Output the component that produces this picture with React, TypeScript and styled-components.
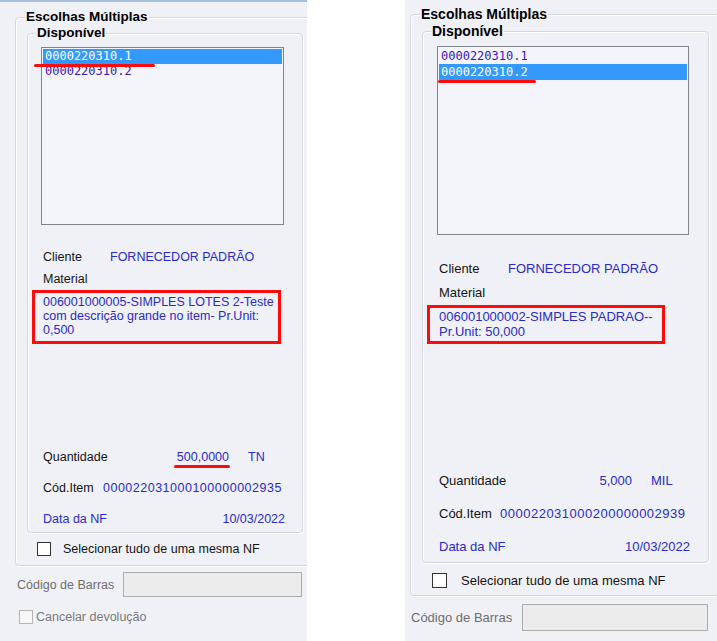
import React from "react";
import styled, { createGlobalStyle } from "styled-components";

type M = {
  panelW: number; offset: number; topBar: boolean; padTop: number; padLeft: number;
  font: number; bold: number; lh: number;
  outerW: number; outerPadL: number; outerPadB: number; outerLegendML: number; innerLegendML: number;
  innerW: number; innerPadL: number; innerPadB: number;
  listMT: number; listW: number; listH: number; itemH: number;
  clienteMT: number; rowGap: number; matMT: number; matLH: number;
  qtyMT: number; infoGap: number; infoW: number;
  labelW: number; qtyLabelW: number; qtyValW: number; unitML: number; codeLabelW: number;
  checkMT: number; checkSize: number; checkGap: number; checkML: number;
  barMT: number; barLabelPL: number; barLabelW: number; inputW: number; inputH: number;
};

const LEFT: M = {
  panelW: 307, offset: 0, topBar: true, padTop: 7, padLeft: 15,
  font: 12.5, bold: 13.5, lh: 16,
  outerW: 312, outerPadL: 11, outerPadB: 8, outerLegendML: -2, innerLegendML: -5,
  innerW: 276, innerPadL: 13, innerPadB: 5,
  listMT: 6, listW: 243, listH: 178, itemH: 15,
  clienteMT: 24, rowGap: 6, matMT: 8, matLH: 14,
  qtyMT: 112, infoGap: 15, infoW: 242,
  labelW: 67, qtyLabelW: 130, qtyValW: 56, unitML: 19, codeLabelW: 60,
  checkMT: 8, checkSize: 14, checkGap: 12, checkML: 10,
  barMT: 6, barLabelPL: 2, barLabelW: 106, inputW: 179, inputH: 25,
};

const RIGHT: M = {
  panelW: 312, offset: 98, topBar: false, padTop: 6, padLeft: 5,
  font: 13, bold: 14, lh: 17,
  outerW: 320, outerPadL: 11, outerPadB: 6, outerLegendML: -2, innerLegendML: -6,
  innerW: 287, innerPadL: 14, innerPadB: 7,
  listMT: 6, listW: 252, listH: 189, itemH: 16,
  clienteMT: 25, rowGap: 7, matMT: 8, matLH: 15,
  qtyMT: 133, infoGap: 16, infoW: 251,
  labelW: 69, qtyLabelW: 136, qtyValW: 57, unitML: 19, codeLabelW: 61,
  checkMT: 9, checkSize: 15, checkGap: 14, checkML: 10,
  barMT: 8, barLabelPL: 1, barLabelW: 111, inputW: 186, inputH: 27,
};

const BG = "#f0f1f7";
const BLUE = "#2a2ac6";
const RED = "#ff0a0a";

const GlobalStyle = createGlobalStyle`
  html, body { margin: 0; padding: 0; background: #ffffff; }
  body { font-family: "Liberation Sans", Arial, sans-serif; color: #111; }
  #root { width: 717px; height: 641px; }
`;

const Page = styled.div`
  display: flex;
  width: 717px;
  height: 641px;
  overflow: hidden;
  background: #ffffff;
`;

const Panel = styled.div<{ $m: M }>`
  flex: none;
  box-sizing: border-box;
  width: ${(p) => p.$m.panelW}px;
  height: 641px;
  margin-left: ${(p) => p.$m.offset}px;
  padding: ${(p) => p.$m.padTop}px 0 0 ${(p) => p.$m.padLeft}px;
  background: ${BG};
  border-top: ${(p) => (p.$m.topBar ? "2px solid #a6bedf" : "none")};
  overflow: hidden;
  font-size: ${(p) => p.$m.font}px;
  line-height: ${(p) => p.$m.lh}px;
`;

const Group = styled.fieldset<{ $w: number; $pl: number; $pb: number }>`
  box-sizing: border-box;
  width: ${(p) => p.$w}px;
  margin: 0;
  padding: 0 0 ${(p) => p.$pb}px ${(p) => p.$pl}px;
  border: 1px solid #d3d6df;
  border-radius: 4px;
  box-shadow: inset 1px 1px 0 #ffffff, 1px 1px 0 #ffffff;
  display: flex;
  flex-direction: column;
  min-width: 0;
`;

const Legend = styled.legend<{ $m: M; $ml: number }>`
  margin-left: ${(p) => p.$ml}px;
  padding: 0 1px;
  font-weight: bold;
  font-size: ${(p) => p.$m.bold}px;
  line-height: ${(p) => p.$m.lh}px;
  color: #000;
  background: ${BG};
`;

const ListBox = styled.div<{ $m: M }>`
  position: relative;
  box-sizing: border-box;
  width: ${(p) => p.$m.listW}px;
  height: ${(p) => p.$m.listH}px;
  margin-top: ${(p) => p.$m.listMT}px;
  padding: 1px;
  border: 1px solid #7f848d;
  background: #f4f5fa;
`;

const ListItem = styled.div<{ $sel: boolean; $h: number }>`
  height: ${(p) => p.$h}px;
  line-height: ${(p) => p.$h}px;
  padding-left: 2px;
  font-family: "DejaVu Sans Mono", "Liberation Mono", monospace;
  font-size: 12px;
  color: ${(p) => (p.$sel ? "#ffffff" : "#3a16b4")};
  background: ${(p) => (p.$sel ? "#3399ff" : "transparent")};
`;

const Mark = styled.div<{ $x: number; $y: number; $w: number }>`
  position: absolute;
  left: ${(p) => p.$x}px;
  top: ${(p) => p.$y}px;
  width: ${(p) => p.$w}px;
  height: 3px;
  border-radius: 2px;
  background: ${RED};
  pointer-events: none;
`;

const RedBox = styled.div<{ $x: number; $y: number; $w: number; $h: number }>`
  position: absolute;
  left: ${(p) => p.$x}px;
  top: ${(p) => p.$y}px;
  width: ${(p) => p.$w}px;
  height: ${(p) => p.$h}px;
  box-sizing: border-box;
  border: 3px solid ${RED};
  pointer-events: none;
`;

const Row = styled.div<{ $mt: number; $w?: number; $between?: boolean }>`
  display: flex;
  align-items: center;
  margin-top: ${(p) => p.$mt}px;
  padding-left: 2px;
  width: ${(p) => (p.$w ? `${p.$w}px` : "auto")};
  justify-content: ${(p) => (p.$between ? "space-between" : "flex-start")};
  white-space: nowrap;
`;

const Label = styled.span<{ $w?: number; $blue?: boolean }>`
  flex: none;
  width: ${(p) => (p.$w ? `${p.$w}px` : "auto")};
  color: ${(p) => (p.$blue ? BLUE : "#141414")};
`;

const Value = styled.span<{ $spaced?: boolean }>`
  color: ${BLUE};
  letter-spacing: ${(p) => (p.$spaced ? "0.5px" : "0")};
`;

const QtyValue = styled.span<{ $w: number }>`
  position: relative;
  flex: none;
  width: ${(p) => p.$w}px;
  text-align: right;
  color: ${BLUE};
`;

const Unit = styled.span<{ $ml: number }>`
  margin-left: ${(p) => p.$ml}px;
  color: ${BLUE};
`;

const Material = styled.div<{ $m: M }>`
  position: relative;
  margin-top: ${(p) => p.$m.matMT}px;
  padding-left: 2px;
  line-height: ${(p) => p.$m.matLH}px;
  color: ${BLUE};
  white-space: nowrap;
`;

const Bottom = styled.div<{ $mt: number }>`
  margin-top: ${(p) => p.$mt}px;
  display: flex;
  flex-direction: column;
`;

const CheckRow = styled.label<{ $mt: number; $ml: number; $gap: number; $muted?: boolean }>`
  display: flex;
  align-items: center;
  gap: ${(p) => p.$gap}px;
  margin-top: ${(p) => p.$mt}px;
  margin-left: ${(p) => p.$ml}px;
  color: ${(p) => (p.$muted ? "#7a7a7a" : "#141414")};
  white-space: nowrap;
`;

const Box = styled.span<{ $s: number; $muted?: boolean }>`
  flex: none;
  box-sizing: border-box;
  width: ${(p) => p.$s}px;
  height: ${(p) => p.$s}px;
  border: 1px solid ${(p) => (p.$muted ? "#b4b4b4" : "#333333")};
  background: ${(p) => (p.$muted ? "#f7f7f7" : "#ffffff")};
`;

const BarRow = styled.div<{ $mt: number; $pl: number }>`
  display: flex;
  align-items: center;
  margin-top: ${(p) => p.$mt}px;
  padding-left: ${(p) => p.$pl}px;
`;

const BarLabel = styled.span<{ $w: number }>`
  flex: none;
  width: ${(p) => p.$w}px;
  color: #6e6e6e;
  white-space: nowrap;
`;

const BarInput = styled.div<{ $w: number; $h: number }>`
  flex: none;
  box-sizing: border-box;
  width: ${(p) => p.$w}px;
  height: ${(p) => p.$h}px;
  border: 1px solid #acacac;
  background: #ececec;
`;

type Data = {
  m: M;
  selected: number;
  selMark: { x: number; y: number; w: number };
  material: string[];
  matBox: { x: number; y: number; w: number; h: number };
  qty: string;
  qtyMark?: { x: number; y: number; w: number };
  unit: string;
  code: string;
  cancel: boolean;
};

const Screen: React.FC<{ d: Data }> = ({ d }) => {
  const m = d.m;
  const items = ["0000220310.1", "0000220310.2"];
  return (
    <Panel $m={m}>
      <Group $w={m.outerW} $pl={m.outerPadL} $pb={m.outerPadB}>
        <Legend $m={m} $ml={m.outerLegendML}>Escolhas Múltiplas</Legend>
        <Group $w={m.innerW} $pl={m.innerPadL} $pb={m.innerPadB}>
          <Legend $m={m} $ml={m.innerLegendML}>Disponível</Legend>
          <ListBox $m={m}>
            {items.map((it, i) => (
              <ListItem key={it} $sel={i === d.selected} $h={m.itemH}>
                {it}
              </ListItem>
            ))}
            <Mark $x={d.selMark.x} $y={d.selMark.y} $w={d.selMark.w} />
          </ListBox>
          <Row $mt={m.clienteMT}>
            <Label $w={m.labelW}>Cliente</Label>
            <Value>FORNECEDOR PADRÃO</Value>
          </Row>
          <Row $mt={m.rowGap}>
            <Label>Material</Label>
          </Row>
          <Material $m={m}>
            {d.material.map((l, i) => (
              <React.Fragment key={i}>
                {i > 0 && <br />}
                {l}
              </React.Fragment>
            ))}
            <RedBox $x={d.matBox.x} $y={d.matBox.y} $w={d.matBox.w} $h={d.matBox.h} />
          </Material>
          <Bottom $mt={m.qtyMT}>
            <Row $mt={0}>
              <Label $w={m.qtyLabelW}>Quantidade</Label>
              <QtyValue $w={m.qtyValW}>
                {d.qty}
                {d.qtyMark && <Mark $x={d.qtyMark.x} $y={d.qtyMark.y} $w={d.qtyMark.w} />}
              </QtyValue>
              <Unit $ml={m.unitML}>{d.unit}</Unit>
            </Row>
            <Row $mt={m.infoGap}>
              <Label $w={m.codeLabelW}>Cód.Item</Label>
              <Value $spaced>{d.code}</Value>
            </Row>
            <Row $mt={m.infoGap} $w={m.infoW} $between>
              <Label $blue>Data da NF</Label>
              <Value>10/03/2022</Value>
            </Row>
          </Bottom>
        </Group>
        <CheckRow $mt={m.checkMT} $ml={m.checkML} $gap={m.checkGap}>
          <Box $s={m.checkSize} />
          Selecionar tudo de uma mesma NF
        </CheckRow>
      </Group>
      <BarRow $mt={m.barMT} $pl={m.barLabelPL}>
        <BarLabel $w={m.barLabelW}>Código de Barras</BarLabel>
        <BarInput $w={m.inputW} $h={m.inputH} />
      </BarRow>
      {d.cancel && (
        <CheckRow $mt={12} $ml={4} $gap={3} $muted>
          <Box $s={14} $muted />
          Cancelar devolução
        </CheckRow>
      )}
    </Panel>
  );
};

const leftData: Data = {
  m: LEFT,
  selected: 0,
  selMark: { x: -8, y: 16, w: 121 },
  material: [
    "006001000005-SIMPLES LOTES 2-Teste",
    "com descrição grande no item- Pr.Unit:",
    "0,500",
  ],
  matBox: { x: -9, y: -5, w: 249, h: 54 },
  qty: "500,0000",
  qtyMark: { x: 1, y: 16, w: 56 },
  unit: "TN",
  code: "000022031000100000002935",
  cancel: true,
};

const rightData: Data = {
  m: RIGHT,
  selected: 1,
  selMark: { x: 0, y: 33, w: 98 },
  material: ["006001000002-SIMPLES PADRAO--", "Pr.Unit: 50,000"],
  matBox: { x: -10, y: -4, w: 238, h: 39 },
  qty: "5,000",
  unit: "MIL",
  code: "000022031000200000002939",
  cancel: false,
};

export default function App() {
  return (
    <>
      <GlobalStyle />
      <Page>
        <Screen d={leftData} />
        <Screen d={rightData} />
      </Page>
    </>
  );
}
